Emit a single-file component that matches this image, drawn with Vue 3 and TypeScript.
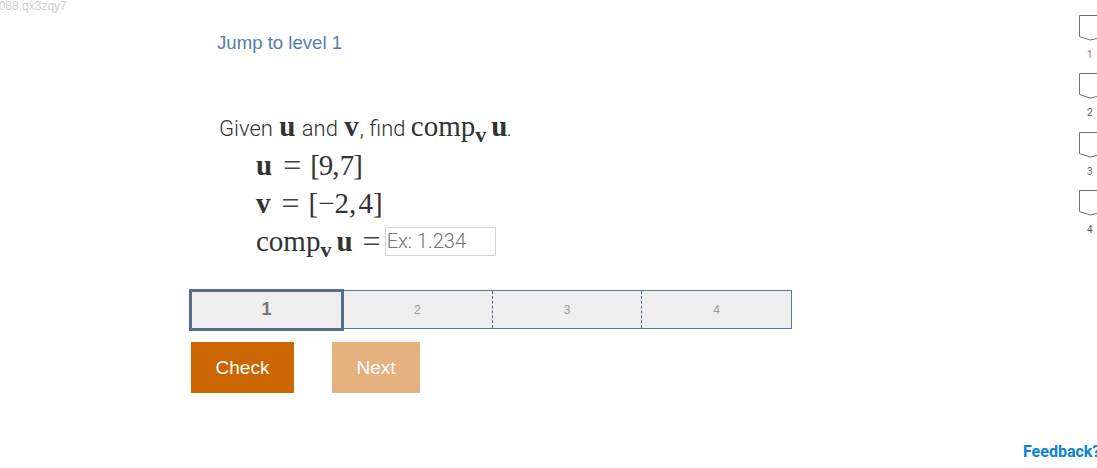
<script setup lang="ts">
const segments = [2, 3, 4]
const navItems = [1, 2, 3, 4]
</script>

<template>
  <div class="page">
    <div class="serial">2088.qx3zqy7</div>
    <main class="content">
      <a class="jump">Jump to level 1</a>
      <div class="question">
        <p class="prompt">
          Given <b class="math">u</b> and <b class="math">v</b>, find
          <span class="math comp">comp<sub>v</sub></span><b class="math">u</b>.
        </p>
        <div class="eq"><b>u</b><span class="eqs">=</span><span class="vec short">[9, 7]</span></div>
        <div class="eq"><b>v</b><span class="eqs">=</span><span class="vec">[−2, 4]</span></div>
        <div class="eq last">
          <span class="comp">comp<sub>v</sub></span><b>u</b><span class="eqs tight">=</span>
          <input class="answer" placeholder="Ex: 1.234" />
        </div>
      </div>
      <div class="levels">
        <div class="level active">1</div>
        <div v-for="s in segments" :key="s" class="level">{{ s }}</div>
      </div>
      <div class="actions">
        <button class="btn check">Check</button>
        <button class="btn next">Next</button>
      </div>
    </main>
    <nav class="side">
      <div v-for="n in navItems" :key="n" class="nav-item">
        <svg class="shield" width="18" height="27" viewBox="0 0 18 27">
          <path d="M18 .5H.5V21.5L11 25L18 23.5" fill="none" stroke="#707070" stroke-width="1" />
        </svg>
        <span class="nav-num" :class="{ first: n === 1 }">{{ n }}</span>
      </div>
    </nav>
    <a class="feedback">Feedback?</a>
  </div>
</template>

<style scoped>
.page {
  position: relative;
  width: 1097px;
  height: 468px;
  overflow: hidden;
  background: #fff;
  font-family: Roboto, "Liberation Sans", sans-serif;
}
.serial {
  height: 12px;
  margin-left: -8px;
  font: 12px/12px "Liberation Sans", sans-serif;
  color: #cfcfcf;
}
.content {
  width: 602px;
  margin-left: 191px;
}
.jump {
  display: block;
  margin: 20px 0 0 26px;
  font: 18.6px/21px "Liberation Sans", sans-serif;
  color: #5580aa;
}
.question {
  height: 237px;
  padding: 61px 0 0 28px;
  box-sizing: border-box;
  color: #333;
}
.prompt {
  margin: 0;
  height: 32px;
  font: 300 22px/29px Roboto, sans-serif;
  color: #333;
}
.math {
  font-family: "Liberation Serif", serif;
  font-size: 29px;
  line-height: 0;
}
b.math {
  margin: 0 1px;
  font-weight: 700;
}
.prompt b:last-of-type {
  margin-right: -1px;
}
.comp sub {
  font-size: 22px;
  font-weight: 700;
  line-height: 0;
  vertical-align: -6px;
  margin-right: 5px;
}
.prompt .comp sub {
  margin-right: 4px;
}
.eq {
  display: flex;
  align-items: center;
  height: 38px;
  padding-left: 37px;
  font: 29px/38px "Liberation Serif", serif;
  color: #333;
}
.vec {
  word-spacing: -5px;
}
.vec.short {
  letter-spacing: -1px;
}
.eqs {
  margin: 0 9px 0 11px;
  font-size: 32px;
  color: #444;
}
.eqs.tight {
  margin: 0 4px 0 10px;
}
.answer {
  box-sizing: border-box;
  width: 111px;
  height: 29px;
  padding: 0 1px;
  border: 1px solid #cfd6da;
  background: #fff;
  font: 300 20px/27px Roboto, sans-serif;
  outline: none;
}
.answer::placeholder {
  color: #757575;
  opacity: 1;
}
.levels {
  display: flex;
  box-sizing: border-box;
  width: 601px;
  height: 39px;
  border: 1px solid #4f7ba8;
  border-left: 0;
  background: #eee;
}
.level {
  flex: 1;
  display: flex;
  align-items: center;
  justify-content: center;
  border-right: 1px dashed #4f6a8a;
  font: 12px "Liberation Sans", sans-serif;
  color: #999;
}
.level:last-child {
  border-right: 0;
}
.level.active {
  flex: 0 0 155px;
  box-sizing: border-box;
  height: 42px;
  padding-bottom: 2px;
  margin: -2px -1px -1px -2px;
  border: 3px solid #556d91;
  font-size: 18px;
  font-weight: 700;
  color: #777;
}
.actions {
  display: flex;
  gap: 38px;
  margin-top: 13px;
}
.btn {
  height: 51px;
  border: 0;
  color: #fff;
  font: 19px "Liberation Sans", sans-serif;
}
.check {
  width: 103px;
  background: #cc6600;
}
.next {
  width: 88px;
  background: #e5b17f;
}
.side {
  position: absolute;
  top: 15px;
  left: 1079px;
  width: 18px;
}
.nav-item {
  display: flex;
  flex-direction: column;
  height: 58.3px;
}
.shield {
  display: block;
}
.nav-num {
  margin-top: 6px;
  margin-left: 8px;
  font: 400 10px/14px Roboto, sans-serif;
  color: #555;
}
.nav-num.first {
  color: #c96a4a;
}
.feedback {
  position: absolute;
  top: 442px;
  left: 1023px;
  white-space: nowrap;
  font: 700 16px/19px Roboto, sans-serif;
  color: #0a83d6;
}
</style>
